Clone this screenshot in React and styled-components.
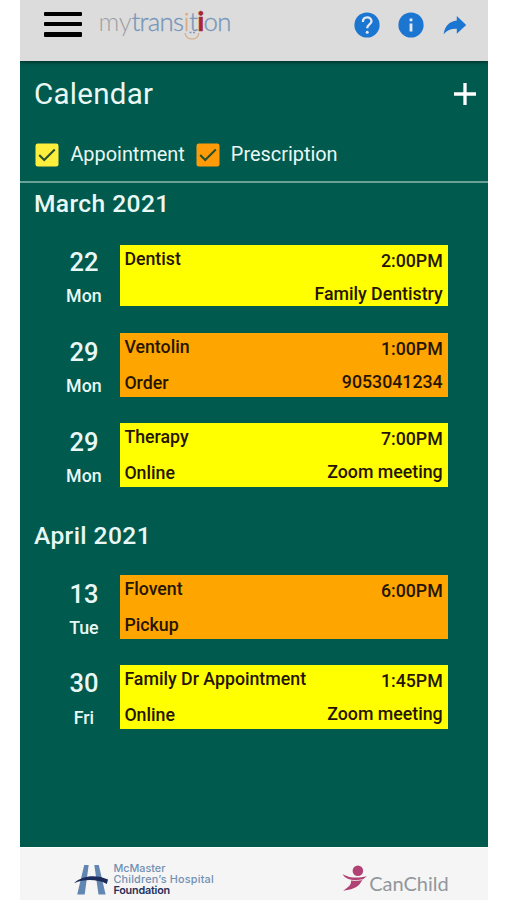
import * as React from "react"
import styled, { createGlobalStyle } from "styled-components"

const months = [
  {
    name: "March 2021",
    events: [
      { day: "22", weekday: "Mon", type: "appointment", title: "Dentist", time: "2:00PM", detail: "Family Dentistry", short: true },
      { day: "29", weekday: "Mon", type: "prescription", title: "Ventolin", time: "1:00PM", status: "Order", detail: "9053041234" },
      { day: "29", weekday: "Mon", type: "appointment", title: "Therapy", time: "7:00PM", status: "Online", detail: "Zoom meeting" },
    ],
  },
  {
    name: "April 2021",
    events: [
      { day: "13", weekday: "Tue", type: "prescription", title: "Flovent", time: "6:00PM", status: "Pickup" },
      { day: "30", weekday: "Fri", type: "appointment", title: "Family Dr Appointment", time: "1:45PM", status: "Online", detail: "Zoom meeting" },
    ],
  },
]

const Header = () => {
  return (
    <TopBar>
      <MenuButton aria-label="Menu">
        <MenuLine />
        <MenuLine />
        <MenuLine />
      </MenuButton>
      <Brand>
        <BrandMy>my</BrandMy>trans<BrandGold>i</BrandGold>t<BrandRed>i</BrandRed>on
        <BrandSmile viewBox="0 0 18 10">
          <path d="M2 2C3 10 15 10 16 2" fill="none" stroke="#d9a77c" strokeWidth="1.2" />
          <path d="M6.5 1.5h2M10 1.5h2" stroke="#8493b5" strokeWidth="1.3" />
        </BrandSmile>
      </Brand>
      <TopIcons>
        <TopIcon viewBox="0 0 26 26">
          <circle cx="13" cy="13" r="12.6" fill="#1b76d2" />
          <path d="M8.9 9.9C8.9 4 17.5 4.2 17.5 9.2C17.5 12.4 13.2 12.5 13.2 16.2" fill="none" stroke="#e4e9ef" strokeWidth="2.3" />
          <circle cx="13.2" cy="20.3" r="1.5" fill="#e4e9ef" />
        </TopIcon>
        <TopIcon viewBox="0 0 26 26">
          <circle cx="13" cy="13" r="12.6" fill="#1b76d2" />
          <path d="M13 11.5v8M13 6.5v2.8" stroke="#e4e9ef" strokeWidth="2.8" />
        </TopIcon>
        <TopIcon viewBox="0 0 26 26">
          <path d="M1.6 22.2C2.9 14 7.1 9.5 14.8 8.5V4L24.2 12.9L14.8 21.7V16.7C9.2 16.5 5 18.1 1.6 22.2Z" fill="#1b76d2" />
        </TopIcon>
      </TopIcons>
    </TopBar>
  )
}

const Filter = ({ label, color }) => {
  return (
    <FilterLabel>
      <CheckBox viewBox="0 0 24 24">
        <rect x=".5" y=".5" width="23" height="23" rx="2.3" fill={color} />
        <path d="M4.2 12.1L9.2 17L19.8 6.5" fill="none" stroke="#27502c" strokeWidth="2.1" />
      </CheckBox>
      {label}
    </FilterLabel>
  )
}

const Event = ({ event }) => {
  return (
    <EventRow>
      <EventDate>
        <Day>{event.day}</Day>
        <Weekday>{event.weekday}</Weekday>
      </EventDate>
      <Card $type={event.type} $short={event.short}>
        <CardColumn>
          <span>{event.title}</span>
          <span>{event.status}</span>
        </CardColumn>
        <CardColumn $right>
          <span>{event.time}</span>
          <span>{event.detail}</span>
        </CardColumn>
      </Card>
    </EventRow>
  )
}

const Footer = () => {
  return (
    <Sponsors>
      <McMaster>
        <BridgeLogo viewBox="0 0 36 32">
          <path d="M10.5 .5h4.6L11 31H3.3zM20.9.5h4.6L32.5 31h-7.3z" fill="#6286b2" />
          <path d="M0 19.3C9 10.5 24 10.5 35 15.5L33.8 20C23 14.8 10.5 15 0 19.3Z" fill="#1d2b5a" />
        </BridgeLogo>
        <McMasterText>
          <span>McMaster</span>
          <Hospital>Children’s Hospital</Hospital>
          <Foundation>Foundation</Foundation>
        </McMasterText>
      </McMaster>
      <CanChild>
        <FigureLogo viewBox="0 0 27 28">
          <circle cx="16.5" cy="6.5" r="5.5" fill="#b14374" />
          <path d="M.5 10C9 14.2 16 14.5 26 12.1C22 15 20.4 16.5 19.8 18.2C16 25 9 26 1.2 27.3C6.2 23.5 10.5 21.3 9.2 15.8C6 15 2.6 13.4.5 10Z" fill="#b14374" />
          <path d="M8.5 16.1C12 17 17 16.8 21.5 15.6" fill="none" stroke="#f5f5f5" strokeWidth=".8" />
        </FigureLogo>
        <CanChildText>CanChild</CanChildText>
      </CanChild>
    </Sponsors>
  )
}

const App = () => {
  return (
    <Phone>
      <GlobalStyle />
      <Header />
      <Main>
        <TitleBar>
          <Title>Calendar</Title>
          <AddButton aria-label="Add">
            <svg width="24" height="24" viewBox="0 0 24 24">
              <path d="M12 1v22M1 12h22" stroke="#fff" strokeWidth="3.3" />
            </svg>
          </AddButton>
        </TitleBar>
        <Filters>
          <Filter label="Appointment" color="#ffee3b" />
          <Filter label="Prescription" color="#ff9b08" />
        </Filters>
        {months.map((month) => (
          <Month key={month.name}>
            <MonthName>{month.name}</MonthName>
            <EventList>
              {month.events.map((event, index) => (
                <Event event={event} key={index} />
              ))}
            </EventList>
          </Month>
        ))}
      </Main>
      <Footer />
    </Phone>
  )
}
export default App

const GlobalStyle = createGlobalStyle`
  * {
    box-sizing: border-box;
  }

  body {
    margin: 0;
    background: #fff;
    font-family: Roboto, sans-serif;
  }
`;

const Phone = styled.div`
  display: flex;
  flex-direction: column;
  width: 467.3px;
  height: 900px;
  margin-left: 20.4px;
  overflow: hidden;
`;

const TopBar = styled.header`
  display: flex;
  align-items: flex-start;
  flex: none;
  height: 61px;
  padding: 0 19.5px 0 24px;
  background: #dcdcdc;
  box-shadow: 0 1px 4px rgba(0, 0, 0, 0.55);
  z-index: 1;
`;

const MenuButton = styled.button`
  display: flex;
  flex-direction: column;
  gap: 6px;
  width: 38px;
  margin-top: 11.6px;
  padding: 0;
  border: 0;
  background: none;
`;

const MenuLine = styled.span`
  width: 100%;
  height: 4.4px;
  border-radius: 1px;
  background: #000;
`;

const Brand = styled.div`
  position: relative;
  margin: 5px 0 0 16px;
  color: #7795b8;
  font-family: Lato, sans-serif;
  font-size: 25.8px;
  font-weight: 300;
  line-height: 32px;
  letter-spacing: -0.7px;
  white-space: nowrap;
  -webkit-text-stroke: 0.3px currentColor;
`;

const BrandMy = styled.span`
  color: #9c9fa6;
  letter-spacing: -0.2px;
  -webkit-text-stroke: 0;
`;

const BrandGold = styled.span`
  margin: 0 0.5px;
  color: #d9a77c;
`;

const BrandRed = styled.span`
  color: #a82631;
  font-weight: 900;
`;

const BrandSmile = styled.svg`
  position: absolute;
  left: 85px;
  top: 26px;
  width: 18px;
  height: 10px;
`;

const TopIcons = styled.div`
  display: flex;
  gap: 18px;
  margin: 11.6px 0 0 auto;
`;

const TopIcon = styled.svg`
  width: 26px;
  height: 26px;
`;

const Main = styled.main`
  flex: none;
  height: 785.5px;
  background: #005a4e;
  color: #e9f8f5;
`;

const TitleBar = styled.div`
  display: flex;
  align-items: center;
  justify-content: space-between;
  height: 65.5px;
  padding: 0 10.4px 0 13.5px;
`;

const Title = styled.h1`
  margin: 0;
  font-size: 29.5px;
  font-weight: 400;
  letter-spacing: 0.3px;
`;

const AddButton = styled.button`
  display: flex;
  padding: 0;
  border: 0;
  background: none;
`;

const Filters = styled.div`
  display: flex;
  gap: 11px;
  height: 56.5px;
  padding: 15.6px 0 0 15px;
  border-bottom: 2px solid #6ba298;
`;

const FilterLabel = styled.label`
  display: flex;
  align-items: center;
  gap: 11px;
  height: 25px;
  font-size: 19.9px;
`;

const CheckBox = styled.svg`
  width: 24px;
  height: 24px;
`;

const Month = styled.section`
  padding: 7px 40px 27.5px 13.5px;
`;

const MonthName = styled.h2`
  margin: 0;
  font-size: 24.6px;
  font-weight: 500;
  line-height: 28px;
  letter-spacing: 0.4px;
`;

const EventList = styled.div`
  display: flex;
  flex-direction: column;
  gap: 25.4px;
  padding-top: 25px;
`;

const EventRow = styled.div`
  display: flex;
  align-items: center;
  height: 64.5px;
`;

const EventDate = styled.div`
  display: flex;
  flex-direction: column;
  align-self: flex-start;
  align-items: center;
  width: 72px;
  margin: 3.8px 0 0 14px;
`;

const Day = styled.span`
  font-size: 25.5px;
  font-weight: 500;
  line-height: 30px;
`;

const Weekday = styled.span`
  margin-top: 6.3px;
  font-size: 17.8px;
  font-weight: 500;
  line-height: 26px;
`;

const Card = styled.div`
  display: flex;
  justify-content: space-between;
  flex: 1;
  height: ${({ $short }) => ($short ? "61.5px" : "64.5px")};
  padding: 0 5px 0 4.5px;
  background: ${({ $type }) => ($type === "appointment" ? "#ffff00" : "#ffa500")};
  color: #251500;
  font-size: 17.75px;
  font-weight: 500;
  line-height: 22px;
`;

const CardColumn = styled.div`
  display: flex;
  flex-direction: column;
  gap: ${({ $right }) => ($right ? "11px" : "14px")};
  padding-top: ${({ $right }) => ($right ? "5px" : "3px")};
  text-align: ${({ $right }) => ($right ? "right" : "left")};
`;

const Sponsors = styled.footer`
  display: flex;
  justify-content: space-between;
  flex: 1;
  padding: 16.5px 39px 0 54px;
  border-top: 1px solid #fff;
  background: #f5f5f5;
`;

const McMaster = styled.div`
  display: flex;
  gap: 4px;
`;

const BridgeLogo = styled.svg`
  width: 35px;
  height: 32px;
`;

const McMasterText = styled.div`
  display: flex;
  flex-direction: column;
  margin-top: -1.5px;
  color: #7290b2;
  font-family: Inter, sans-serif;
  font-size: 10.8px;
  font-weight: 500;
  line-height: 11.3px;
`;

const Hospital = styled.span`
  letter-spacing: 0.22px;
`;

const Foundation = styled.span`
  color: #25305a;
  font-weight: 600;
  letter-spacing: -0.2px;
`;

const CanChild = styled.div`
  display: flex;
  gap: 1px;
`;

const FigureLogo = styled.svg`
  width: 26px;
  height: 28px;
`;

const CanChildText = styled.span`
  padding-top: 7px;
  color: #92979c;
  font-family: Lato, sans-serif;
  font-size: 20px;
  line-height: 24px;
`;
